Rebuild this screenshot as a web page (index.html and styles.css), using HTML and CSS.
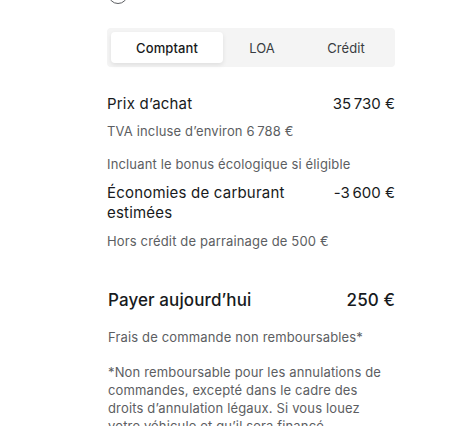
FILE: index.html
```html
<!DOCTYPE html>
<html lang="fr">
<head>
<meta charset="utf-8">
<link rel="stylesheet" href="styles.css">
</head>
<body>
<div class="panel">
  <div class="radio"></div>
  <div class="tabs">
    <div class="tab active">Comptant</div>
    <div class="tab">LOA</div>
    <div class="tab">Crédit</div>
  </div>
  <div class="row price">
    <span class="label">Prix d’achat</span>
    <span class="value">35&#8239;730 €</span>
  </div>
  <p class="note tva">TVA incluse d’environ 6&#8239;788 €</p>
  <p class="note bonus">Incluant le bonus écologique si éligible</p>
  <div class="row savings">
    <span class="label wrap">Économies de carburant estimées</span>
    <span class="value">-3&#8239;600 €</span>
  </div>
  <p class="note hors">Hors crédit de parrainage de 500 €</p>
  <div class="row today">
    <span class="label">Payer aujourd’hui</span>
    <span class="value">250 €</span>
  </div>
  <p class="note frais">Frais de commande non remboursables*</p>
  <p class="note foot">*Non remboursable pour les annulations de<br>commandes, excepté dans le cadre des<br>droits d’annulation légaux. Si vous louez<br>votre véhicule et qu’il sera financé</p>
</div>
</body>
</html>
```
FILE: styles.css
```css
html, body {
  margin: 0;
  padding: 0;
  background: #ffffff;
}
body {
  font-family: Inter, "Noto Sans", sans-serif;
  color: #171a20;
  overflow: hidden;
  height: 426px;
}
.panel {
  width: 288px;
  margin-left: 107px;
  padding-top: 1px;
}
.radio {
  width: 18px;
  height: 18px;
  border: 1.5px solid #5c5e62;
  border-radius: 50%;
  margin-top: -17px;
  margin-left: 1px;
}
.tabs {
  margin-top: 24px;
  display: flex;
  padding: 4px;
  background: #f4f4f4;
  border-radius: 4px;
  height: 31px;
}
.tab {
  flex: 1 1 auto;
  display: flex;
  align-items: center;
  justify-content: center;
  font-size: 13px;
  font-weight: 400;
  letter-spacing: 0.1px;
  color: #393c41;
  border-radius: 4px;
}
.tab.active {
  flex: 0 0 112px;
  background: #ffffff;
  color: #171a20;
  font-weight: 500;
  box-shadow: 0 2px 5px rgba(0, 0, 0, 0.09);
}
.row {
  display: flex;
  justify-content: space-between;
  align-items: flex-start;
}
.label, .value {
  font-size: 15px;
  font-weight: 400;
  letter-spacing: 0.2px;
  line-height: 22px;
}
.price { margin-top: 26px; }
.note {
  margin: 0;
  font-size: 13px;
  letter-spacing: 0.15px;
  line-height: 18px;
  color: #5c5e62;
}
.tva { margin-top: 7px; }
.bonus { margin-top: 15px; }
.savings { margin-top: 10px; }
.savings .label, .savings .value { line-height: 20px; }
.wrap { max-width: 200px; }
.hors { margin-top: 9px; }
.today { margin-top: 38px; padding-left: 1px; }
.today .label, .today .value {
  font-size: 17px;
  font-weight: 500;
  letter-spacing: 0.1px;
  line-height: 24px;
}
.frais { margin-top: 16px; padding-left: 1px; }
.foot { margin-top: 17px; padding-left: 1px; }
```
